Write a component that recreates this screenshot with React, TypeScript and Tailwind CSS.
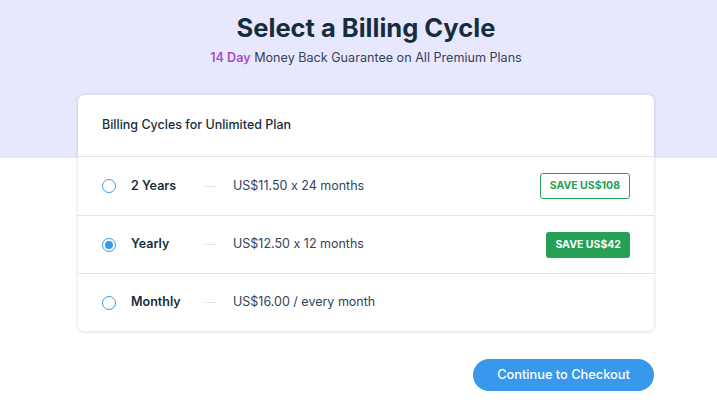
import { useState } from "react";

type Cycle = {
  id: string;
  label: string;
  price: string;
  badge?: string;
  outlined?: boolean;
};

const cycles: Cycle[] = [
  { id: "2y", label: "2 Years", price: "US$11.50 x 24 months", badge: "SAVE US$108", outlined: true },
  { id: "1y", label: "Yearly", price: "US$12.50 x 12 months", badge: "SAVE US$42" },
  { id: "1m", label: "Monthly", price: "US$16.00 / every month" },
];

function Radio({ checked }: { checked: boolean }) {
  return (
    <span className="flex h-[14px] w-[14px] shrink-0 items-center justify-center rounded-full border border-[#3899ec] bg-white">
      {checked && <span className="h-[8px] w-[8px] rounded-full bg-[#3899ec]" />}
    </span>
  );
}

export default function App() {
  const [selected, setSelected] = useState("1y");

  return (
    <div className="relative min-h-[419px] w-full bg-white font-['Inter',sans-serif] text-[#162d3d] [font-feature-settings:'calt'_0]">
      <div className="h-[158px] w-full bg-[#e7e8fe] pl-[15px] pt-[10px] text-center">
        <h1 className="text-[25.5px] font-bold leading-[36px] text-[#162d3d]">
          Select a Billing Cycle
        </h1>
        <p className="mt-[4px] text-[12.6px] leading-[16px] text-[#32445a]">
          <span className="font-semibold text-[#aa4dc8]">14 Day</span> Money Back Guarantee on All Premium Plans
        </p>
      </div>

      <div className="absolute left-[78px] top-[95px] w-[576px] rounded-[6px] bg-white shadow-[0_0_4px_rgba(22,45,61,0.12),0_1px_3px_rgba(22,45,61,0.08)]">
        <div className="flex h-[62px] items-center border-b border-[#dfe5eb] px-[24px] text-[12.5px] font-medium text-[#162d3d]">
          Billing Cycles for Unlimited Plan
        </div>
        {cycles.map((c, i) => (
          <button
            key={c.id}
            type="button"
            onClick={() => setSelected(c.id)}
            className={`flex h-[58px] w-full items-center pl-[24px] pr-[24px] text-left ${
              i > 0 ? "border-t border-[#dfe5eb]" : ""
            }`}
          >
            <Radio checked={selected === c.id} />
            <span className="ml-[15px] w-[74px] text-[12.5px] font-semibold text-[#162d3d]">{c.label}</span>
            <span className="h-px w-[12px] bg-[#dfe5eb]" />
            <span className="ml-[16px] text-[12.5px] text-[#32445a]">{c.price}</span>
            {c.badge && (
              <span
                className={`ml-auto flex h-[26px] items-center rounded-[3px] px-[9px] text-[10.5px] font-bold ${
                  c.outlined
                    ? "border border-[#25a055] bg-white text-[#25a055]"
                    : "bg-[#25a055] text-white"
                }`}
              >
                {c.badge}
              </span>
            )}
          </button>
        ))}
      </div>

      <div className="absolute left-[473px] top-[359px]">
        <button
          type="button"
          className="flex h-[32px] w-[181px] items-center justify-center rounded-full bg-[#3899ec] text-[12.8px] font-medium text-white"
        >
          Continue to Checkout
        </button>
      </div>
    </div>
  );
}
